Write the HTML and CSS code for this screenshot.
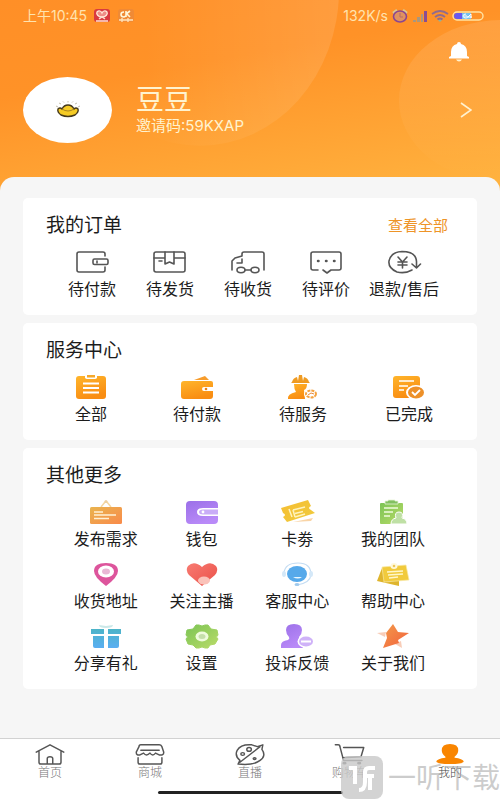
FILE: index.html
```html
<!DOCTYPE html>
<html lang="zh-CN">
<head>
<meta charset="utf-8">
<meta name="viewport" content="width=device-width, initial-scale=1">
<title>我的</title>
<link rel="stylesheet" href="styles.css">
</head>
<body>
<svg class="defs" width="0" height="0" aria-hidden="true">
  <defs>
    <linearGradient id="orange" x1="0" y1="0" x2="0.4" y2="1"><stop offset="0" stop-color="#ffb52b"/><stop offset="1" stop-color="#f98d12"/></linearGradient>
    <linearGradient id="board" x1="0" y1="0" x2="1" y2="1"><stop offset="0" stop-color="#e9b44f"/><stop offset="1" stop-color="#f98a4a"/></linearGradient>
    <linearGradient id="purple" x1="0" y1="0" x2="0.5" y2="1"><stop offset="0" stop-color="#9b70e8"/><stop offset="1" stop-color="#b98af8"/></linearGradient>
    <linearGradient id="green" x1="0" y1="0" x2="1" y2="1"><stop offset="0" stop-color="#7cc455"/><stop offset="1" stop-color="#b9db68"/></linearGradient>
    <linearGradient id="blue" x1="0" y1="0" x2="0" y2="1"><stop offset="0" stop-color="#4cb4c8"/><stop offset="1" stop-color="#5aaef2"/></linearGradient>
    <linearGradient id="red" x1="0" y1="0" x2="1" y2="1"><stop offset="0" stop-color="#f87b72"/><stop offset="1" stop-color="#ea5048"/></linearGradient>
    <linearGradient id="yellow" x1="0" y1="0" x2="1" y2="1"><stop offset="0" stop-color="#f6bd31"/><stop offset="1" stop-color="#efcc3e"/></linearGradient>
    <linearGradient id="star" x1="0" y1="0" x2="1" y2="1"><stop offset="0" stop-color="#f39a4a"/><stop offset="1" stop-color="#f2603c"/></linearGradient>
    <linearGradient id="glow" x1="0" y1="0" x2="1" y2="0"><stop offset="0.3" stop-color="#fff" stop-opacity="0"/><stop offset="1" stop-color="#fff" stop-opacity="0.11"/></linearGradient>
    <linearGradient id="glow-side" x1="0" y1="0" x2="0" y2="1"><stop offset="0" stop-color="#fff" stop-opacity="0.11"/><stop offset="1" stop-color="#fff" stop-opacity="0"/></linearGradient>
  </defs>
</svg>

<header class="header">
  <svg class="header-art" viewBox="0 0 500 190" preserveAspectRatio="none" aria-hidden="true">
    <ellipse cx="200" cy="-10" rx="139" ry="155" fill="url(#glow)"/>
    <ellipse cx="500" cy="100" rx="101" ry="80" fill="url(#glow-side)"/>
  </svg>
  <div class="status">
    <div class="status-group">
      <span>上午10:45</span>
      <svg width="18" height="14" viewBox="0 0 18 14" aria-hidden="true"><rect x="1" width="16" height="13" rx="3" fill="#d93a3f"/><path d="M9 8C5 8 3 5 4 3c2-2 4-1 5 1 1-2 3-3 5-1 1 2-1 5-5 5z" fill="#ef8d86" stroke="#ffe9d8" stroke-width="1.3"/><path d="M3 12h12M6 10l3-2 3 2" stroke="#ffe0d0" stroke-width="1.5" fill="none"/></svg>
      <svg width="18" height="14" viewBox="0 0 18 14" aria-hidden="true"><rect x="1" width="16" height="13" rx="3" fill="#f08a35"/><path d="M7 3C3 3 3 8 7 8l2-1M9 2v6M9 5l4-3M10 5l3 3" stroke="#fff6d8" stroke-width="1.6" fill="none"/><path d="M2 11h14M5 9v4M11 9v4" stroke="#ffe5bd" stroke-width="1.3"/></svg>
    </div>
    <div class="status-group status-right">
      <span>132K/s</span>
      <svg width="18" height="14" viewBox="0 0 18 14" aria-hidden="true"><path d="M2 4l4-3M12 1l4 3" stroke="#d9c995" stroke-width="2.4"/><ellipse cx="9" cy="7.5" rx="6.5" ry="5.5" fill="#e0925f" stroke="#8a4590" stroke-width="1.6"/><path d="M9 4v4h3" stroke="#b56a6a" fill="none"/></svg>
      <svg width="16" height="12" viewBox="0 0 16 12" aria-hidden="true"><path d="M1 12V10h3v2zM5 12V7h3v5zM9 12V4h2v8z" fill="#a9977e"/><path d="M12 12V1h3v11z" fill="#8a4d92"/></svg>
      <svg width="18" height="12" viewBox="0 0 18 12" aria-hidden="true"><path d="M1 4q8-6 16 0M4 7q5-4 10 0M6.5 9.5q2.500-2 5 0" fill="none" stroke="#8f6b90" stroke-width="1.9"/><path d="M7 10h4l-2 2z" fill="#8fb29b"/></svg>
      <svg width="32" height="10" viewBox="0 0 32 10" aria-hidden="true"><rect x="1" y="1" width="30" height="8" rx="4" fill="none" stroke="#ffe3a3" stroke-width="1.4"/><path d="M5 2h14v6H5a3 3 0 010-6z" fill="#6958ef"/><path d="M10 2h9v6h-9z" fill="#75c0ef"/><path d="M14 3q-3 0-3 2t3 2 1-2h-3M19 7V3l-3 3h4" fill="none" stroke="#fff"/></svg>
    </div>
  </div>
  <div class="toolbar">
    <button class="icon-button" type="button" aria-label="消息">
      <svg width="22" height="20" viewBox="0 0 22 20" aria-hidden="true"><path d="M11 0q2 0 2 2 6 1.500 6 8v4l2 1v1.500H1V15l2-1v-4q0-6.500 6-8 0-2 2-2z" fill="#fff"/><path d="M8 17.500h6q-1 2-3 2t-3-2z" fill="#fff3cf"/></svg>
    </button>
  </div>
  <div class="profile">
    <div class="avatar">
      <svg width="30" height="20" viewBox="0 0 30 20" aria-hidden="true"><path d="M3 6l2 1M6 3l2 1M10 1.500l1 1M15 1v1.500M20 1.500l-1 1M24 3l-2 1M27 6l-2 1" stroke="#c4bfae"/><path d="M9 9q2-4 6-4t6 4q2-2 4 0 1 3-3 6-7 3-14 0-4-3-3-6 2-2 4 0z" fill="#f5cb25" stroke="#45391b" stroke-width="1.4"/><path d="M9 9q6 4 12 0" stroke="#aa8520" fill="none"/></svg>
    </div>
    <div class="identity">
      <h1 class="name">豆豆</h1>
      <p class="code">邀请码:59KXAP</p>
    </div>
    <a class="more" href="#profile" aria-label="个人资料"><svg width="12" height="18" viewBox="0 0 12 18" aria-hidden="true"><path d="M1 2l10 7-10 7" fill="none" stroke="#fff1cf" stroke-width="1.6"/></svg></a>
  </div>
</header>

<main class="sheet">
  <section class="card">
    <div class="card-head"><h2>我的订单</h2><a class="all" href="#orders">查看全部</a></div>
    <div class="grid orders">
      <a class="item" href="#pay"><svg class="icon line" viewBox="0 0 32 24" aria-hidden="true"><path d="M29 6V4q0-2-2-2H3Q1 2 1 4v16q0 2 2 2h24q2 0 2-2v-3"/><rect x="17" y="9" width="15" height="5.500" rx="1.5"/><path d="M21 11v2"/></svg><span>待付款</span></a>
      <a class="item" href="#ship"><svg class="icon line" viewBox="0 0 32 24" aria-hidden="true"><rect x="0" y="2" width="31" height="20" rx="2"/><path d="M0 8h11M20 8h11M11 2v12l4.500-2 4.500 2V2M5 11h3"/></svg><span>待发货</span></a>
      <a class="item" href="#receive"><svg class="icon line" viewBox="0 0 32 24" aria-hidden="true"><path d="M0 20V11l3-3 7-2V4q0-2 2-2h18q2 0 2 2v16M5 13h5V9M13 20h6"/><ellipse cx="9" cy="20" rx="4" ry="2.700"/><ellipse cx="23" cy="20" rx="4" ry="2.700"/></svg><span>待收货</span></a>
      <a class="item" href="#review"><svg class="icon line" viewBox="0 0 32 24" aria-hidden="true"><path d="M8 20H3q-2 0-2-2V4q0-2 2-2h26q2 0 2 2v14q0 2-2 2h-8l-4 3-4-3"/><path d="M8 11h.5M16 11h.5M24 11h.5" stroke-width="2.5"/></svg><span>待评价</span></a>
      <a class="item" href="#refund"><svg class="icon line" viewBox="0 0 32 24" aria-hidden="true"><path d="M24 20Q17 24 9 22 0 18 1 11 3 2 14 1.500q14 0 14.500 10v5M24 14l4.500 4 4-4"/><path d="M10 7l4.500 5L19 7M10 12h9M10 15h9M14.500 12v6"/></svg><span>退款/售后</span></a>
    </div>
  </section>

  <section class="card">
    <div class="card-head"><h2>服务中心</h2></div>
    <div class="grid services">
      <a class="item" href="#all"><svg class="icon" viewBox="0 0 32 24" aria-hidden="true"><rect x="1" y="1" width="30" height="23" rx="3" fill="url(#orange)"/><path d="M10 0h12v3q-1 1-2 1h-8q-1 0-2-1z" fill="#fff"/><rect x="12" y="0" width="8" height="2.500" fill="#f5a92c"/><path d="M8 8.500h16M8 13h16M8 17.500h16" stroke="#fff" stroke-width="1.8"/></svg><span>全部</span></a>
      <a class="item" href="#service-pay"><svg class="icon" viewBox="0 0 32 24" aria-hidden="true"><path d="M13 5l11-4 4 4z" fill="#f79d2d"/><path d="M3 6h27q2 0 2 2v4H23q-2 0-2 2t2 2h9v5q0 3-3 3H3q-3 0-3-3V9q0-3 3-3z" fill="url(#orange)"/><circle cx="25" cy="14" r="1.3" fill="#e88217"/></svg><span>待付款</span></a>
      <a class="item" href="#service-wait"><svg class="icon" viewBox="0 0 32 24" aria-hidden="true"><path d="M5 7q1-4 5-5l1 4 1-6h3l1 6 1-4q4 1 5 5l1 1H4z" fill="#ef9b22"/><path d="M7 9h13q0 5-3 6l1 9H1q-1-5 8-7-2-3-2-8z" fill="url(#orange)"/><ellipse cx="24" cy="19" rx="7" ry="5.500" fill="#fff"/><ellipse cx="24" cy="19" rx="5" ry="3.500" fill="none" stroke="#f4a240" stroke-width="2" stroke-dasharray="3 1"/><path d="M21 20l3-2 3 1" stroke="#e7893c" fill="none"/></svg><span>待服务</span></a>
      <a class="item" href="#done"><svg class="icon" viewBox="0 0 32 24" aria-hidden="true"><rect x="0" y="1" width="27" height="22" rx="3" fill="url(#orange)"/><path d="M6 6h15M6 11h9M6 15h5" stroke="#fff" stroke-width="1.7"/><ellipse cx="23" cy="17.500" rx="10" ry="7.500" fill="#fff"/><ellipse cx="23" cy="17.500" rx="8" ry="6" fill="#ed9028"/><path d="M19 17l3 3 5-5" fill="none" stroke="#fff" stroke-width="1.8"/></svg><span>已完成</span></a>
    </div>
  </section>

  <section class="card">
    <div class="card-head"><h2>其他更多</h2></div>
    <div class="grid others">
      <a class="item" href="#publish"><svg class="icon" viewBox="0 0 32 24" aria-hidden="true"><path d="M11 7l4-5h2l4 5" fill="none" stroke="#f4d7a2" stroke-width="1.5"/><circle cx="16" cy="1.500" r="1.5" fill="#edd0a0"/><rect y="7" width="32" height="17" rx="1.5" fill="url(#board)"/><path d="M4 12h9M4 15h22M4 18.500h15" stroke="#fff1d5" stroke-width="1.6"/></svg><span>发布需求</span></a>
      <a class="item" href="#wallet"><svg class="icon" viewBox="0 0 32 24" aria-hidden="true"><path d="M4 1h24q4 0 4 4v15q0 4-4 4H4q-4 0-4-4V5q0-4 4-4z" fill="url(#purple)"/><path d="M32 8H17q-6 0-6 4t6 4h15z" fill="#fff"/><path d="M32 9.500H17q-4 0-4 2.500t4 2.500h15z" fill="#c9acf7"/><circle cx="17" cy="12" r="1.4" fill="#fff"/></svg><span>钱包</span></a>
      <a class="item" href="#coupon"><svg class="icon" viewBox="0 0 32 24" aria-hidden="true"><path d="M0 8L27 0l3 6q-4 2 0 4l4 3L6 22l-4-5q4-2 0-4z" fill="url(#yellow)"/><path d="M8 9l3 8M12 10l12-3M12 10l2 7M14 13.500l8-2M14 17l10-3" stroke="#fff3bd" stroke-width="1.5"/><path d="M12 22l20-4-2 3z" fill="#f9d4a6"/></svg><span>卡劵</span></a>
      <a class="item" href="#team"><svg class="icon" viewBox="0 0 32 24" aria-hidden="true"><rect x="3" y="3" width="23" height="21" rx="1" fill="url(#green)"/><path d="M8 4V1h3V0h7v1h3v3z" fill="#82c060" stroke="#e7f5d7" stroke-width=".8"/><path d="M7 8h14M7 12h9M7 16h6" stroke="#f0fbda" stroke-width="1.7"/><path d="M14 24q0-5 5-6-2-6 3-6t3 6q5 1 5 6z" fill="#bfe0a5" stroke="#fff"/></svg><span>我的团队</span></a>
      <a class="item" href="#address"><svg class="icon" viewBox="0 0 32 24" aria-hidden="true"><path d="M16 24Q4 15 4 9q0-8 12-8t12 8q0 6-12 15z" fill="#dd559c"/><ellipse cx="16" cy="9.500" rx="8" ry="6" fill="#fff"/><ellipse cx="16" cy="9.500" rx="4" ry="3" fill="#e9b7d5"/></svg><span>收货地址</span></a>
      <a class="item" href="#follow"><svg class="icon" viewBox="0 0 32 24" aria-hidden="true"><path d="M16 24L3 13Q-1 8 2 4q6-6 14 1 8-7 14-1 3 4-1 9z" fill="url(#red)"/><ellipse cx="18" cy="18.500" rx="6" ry="4" fill="#fac2b9"/></svg><span>关注主播</span></a>
      <a class="item" href="#support"><svg class="icon" viewBox="0 0 32 24" aria-hidden="true"><path d="M3 11Q4 1 17 1t13 12q-1 8-14 10" fill="none" stroke="#c3dcf3" stroke-width="1.2"/><ellipse cx="16" cy="12" rx="10" ry="8" fill="#56a9ea"/><path d="M12 15q5 3 9 0z" fill="#e9f8ff"/><ellipse cx="3" cy="12" rx="2" ry="3" fill="#d4e8f8"/><ellipse cx="30" cy="12" rx="2" ry="3" fill="#d4e8f8"/><ellipse cx="16" cy="22.500" rx="2.500" ry="1.500" fill="#9fc9ec"/></svg><span>客服中心</span></a>
      <a class="item" href="#help"><svg class="icon" viewBox="0 0 32 24" aria-hidden="true"><path d="M5 6L0 19l22 5V9z" fill="#dfb52d"/><path d="M5 5l24-2 3 15-25 2z" fill="#f1ca3c" stroke="#f8e8a5" stroke-width=".7"/><path d="M10 10l16-1M11 13l15-1M12 16l9-1" stroke="#fff7c9" stroke-width="1.4"/><ellipse cx="17" cy="4" rx="3.500" ry="3" fill="#fff9dc"/><circle cx="17" cy="4" r="1.3" fill="#eec85a"/></svg><span>帮助中心</span></a>
      <a class="item" href="#share"><svg class="icon" viewBox="0 0 32 24" aria-hidden="true"><path d="M16 4Q9 4 9 1l7 1 7-1q0 3-7 3z" fill="#cbe8e8"/><path d="M1 5h13v5H1zM18 5h13v5H18zM3 12h11v12H5q-2 0-2-2zM18 12h11v10q0 2-2 2h-9z" fill="url(#blue)"/></svg><span>分享有礼</span></a>
      <a class="item" href="#settings"><svg class="icon" viewBox="0 0 32 24" aria-hidden="true"><path d="M10 1h3q3 2 6 0h3l3 4 6 1 1 5q-3 2 0 4l-3 5-5 1-2 3h-3q-3-2-6 0h-3l-3-3-5-1-2-5q3-2 0-4l1-5 6-1z" fill="url(#green)" stroke="url(#green)" stroke-linejoin="round"/><ellipse cx="16" cy="12.500" rx="6.500" ry="5" fill="#effbdc"/><ellipse cx="16" cy="12.500" rx="3.500" ry="2.500" fill="#c5dfaa"/></svg><span>设置</span></a>
      <a class="item" href="#feedback"><svg class="icon" viewBox="0 0 32 24" aria-hidden="true"><path d="M13 0q8 0 8 6 0 4-3 7 0 3 4 4v7H0v-3q0-4 7-5 2-1 1-3-3-3-3-7 0-6 8-6z" fill="url(#purple)"/><ellipse cx="25" cy="17.500" rx="8.500" ry="6.500" fill="#fff"/><ellipse cx="25" cy="17.500" rx="7" ry="5" fill="#cfb2f8"/><path d="M20 17.500h10" stroke="#fff" stroke-width="2"/></svg><span>投诉反馈</span></a>
      <a class="item" href="#about"><svg class="icon" viewBox="0 0 32 24" aria-hidden="true"><path d="M0 9l9-1-1 5zM18 20l6-3 1 7z" fill="#f8cdb8"/><path d="M16 0l5 8 11 1-11 7 1 3-16 5 4-10-1-5z" fill="url(#star)"/></svg><span>关于我们</span></a>
    </div>
  </section>
</main>

<nav class="tabs" aria-label="主导航">
  <a class="tab" href="#home"><svg class="icon line" viewBox="0 0 32 24" aria-hidden="true"><path d="M1 10L16 2l15 8M4 9v12q0 2 2 2h20q2 0 2-2V9M13 23v-6q0-2 3-2t3 2v6"/></svg><span>首页</span></a>
  <a class="tab" href="#mall"><svg class="icon line" viewBox="0 0 32 24" aria-hidden="true"><path d="M6 2h20q2 0 3 2l2 6q0 4-5 3l-4-2q-3 4-6 0-4 4-7 0l-4 2q-4 1-4-3l3-6q0-2 2-2zM6 8h20M3 16v5q0 2 2 2h22q2 0 2-2v-5"/></svg><span>商城</span></a>
  <a class="tab" href="#live"><svg class="icon line" viewBox="0 0 32 24" aria-hidden="true"><path d="M3 23l2-4Q-1 14 2 8 6 1 18 2l6 2 6-2-1 5q5 7-2 12-8 6-24 4zM5 21L27 4"/><ellipse cx="15" cy="7" rx="2.500" ry="2"/><ellipse cx="8" cy="12" rx="2" ry="1.500"/><ellipse cx="21" cy="17" rx="1.500" ry="1"/></svg><span>直播</span></a>
  <a class="tab" href="#cart"><svg class="icon line" viewBox="0 0 32 24" aria-hidden="true"><path d="M0 2h3q2 0 2 2l4 15h20M9 5h22l-3 10-20 1"/><ellipse cx="10" cy="22" rx="1.500" ry=".7"/><ellipse cx="26" cy="22" rx="1.500" ry=".7"/></svg><span>购物车</span></a>
  <a class="tab active" href="#me" aria-current="page"><svg class="icon" viewBox="0 0 32 24" aria-hidden="true"><path d="M16 1q9 0 9 7 0 4-4 7v1q9 1 10 4 0 3-15 3T1 20q1-3 10-4v-1q-4-3-4-7 0-7 9-7z" fill="#f98500"/></svg><span>我的</span></a>
</nav>
<div class="home-bar"></div>
<div class="watermark">
  <svg width="42" height="44" viewBox="0 0 42 44" aria-hidden="true"><rect width="42" height="43" rx="8" fill="#c8c8c8" fill-opacity=".8"/><path d="M8 12h6v10M14 19v9M18 34q6 0 6-8V16q0-4 4-4h6M24 20h9M29 20v14" fill="none" stroke="#fff" stroke-width="4"/></svg>
  <span>一听下载</span>
</div>
</body>
</html>
```
FILE: styles.css
```css
* {
  box-sizing: border-box;
}

body {
  position: relative;
  display: flex;
  flex-direction: column;
  min-height: 100vh;
  margin: 0;
  background: #f6f6f6;
  color: #1c1c1c;
  font-family: Inter, "Noto Sans CJK SC", sans-serif;
  overflow-x: hidden;
}

h1,
h2,
p {
  margin: 0;
  font-weight: 400;
}

a {
  color: inherit;
  text-decoration: none;
}

svg {
  display: block;
  flex: none;
}

.defs {
  position: absolute;
}

.header {
  position: relative;
  padding: 6px 16px 48px 23px;
  background: linear-gradient(170deg, #ff8f27 0%, #ff9227 35%, #ffb440 100%);
  color: #fff3cf;
}

.header-art {
  position: absolute;
  inset: 0;
  width: 100%;
  height: 100%;
}

.status,
.toolbar,
.profile {
  position: relative;
  display: flex;
  align-items: center;
}

.status {
  justify-content: space-between;
  height: 20px;
  font-size: 14px;
  line-height: 20px;
  color: #ffe3ae;
}

.status-group {
  display: flex;
  align-items: center;
  gap: 6px;
}

.status-right {
  gap: 3px;
}

.toolbar {
  justify-content: flex-end;
  height: 51px;
  padding-right: 14px;
}

.icon-button {
  padding: 0;
  border: 0;
  background: none;
  cursor: pointer;
}

.avatar {
  display: flex;
  align-items: center;
  justify-content: center;
  flex: none;
  width: 89px;
  height: 66px;
  border-radius: 50%;
  background: #fff;
}

.identity {
  flex: 1;
  margin-left: 24px;
}

.name {
  font-size: 28px;
  line-height: 32px;
}

.code {
  font-size: 15px;
  line-height: 20px;
}

.more {
  padding: 0 12px;
}

.sheet {
  position: relative;
  flex: 1;
  display: flex;
  flex-direction: column;
  gap: 8px;
  margin-top: -14px;
  padding: 21px 23px 16px;
  border-radius: 14px 14px 0 0;
  background: #f6f6f6;
}

.card {
  padding: 16px 0;
  border-radius: 5px;
  background: #fff;
}

.card-head {
  display: flex;
  align-items: center;
  justify-content: space-between;
  margin-bottom: 12px;
  padding: 0 29px 0 23px;
}

.card-head h2 {
  font-size: 19px;
  line-height: 24px;
}

.all {
  color: #ee9427;
  font-size: 15px;
  line-height: 24px;
}

.grid {
  display: grid;
  row-gap: 13px;
}

.orders {
  grid-template-columns: repeat(5, 1fr);
  padding: 0 34px 0 30px;
}

.services {
  grid-template-columns: repeat(4, 1fr);
  padding: 0 15px;
}

.others {
  grid-template-columns: repeat(4, 1fr);
  padding: 0 36px 0 35px;
}

.item {
  display: flex;
  flex-direction: column;
  align-items: center;
  gap: 5px;
  font-size: 16px;
  line-height: 20px;
  white-space: nowrap;
}

.icon {
  width: 32px;
  height: 24px;
  overflow: visible;
}

.line {
  fill: none;
  stroke: #555;
  stroke-width: 1.6;
  stroke-linecap: round;
  stroke-linejoin: round;
}

.tabs {
  display: grid;
  grid-template-columns: repeat(5, 1fr);
  padding: 4px 0 10px;
  border-top: 1px solid #d2d2d2;
  background: #fff;
}

.tab {
  display: flex;
  flex-direction: column;
  align-items: center;
  color: #777;
  font-size: 12px;
  font-weight: 300;
  line-height: 16px;
}

.tab .icon {
  width: 30px;
  height: 22px;
}

.active {
  color: #444;
}

.home-bar {
  padding-bottom: 6px;
  background: #fff;
}

.home-bar::before {
  content: "";
  display: block;
  width: 37%;
  height: 3px;
  margin: 0 auto;
  border-radius: 2px;
  background: #222;
}

.watermark {
  position: absolute;
  right: 0;
  bottom: 0;
  display: flex;
  align-items: center;
  gap: 5px;
  color: rgba(170, 170, 170, 0.6);
  font-size: 28px;
  line-height: 40px;
  pointer-events: none;
}
```
